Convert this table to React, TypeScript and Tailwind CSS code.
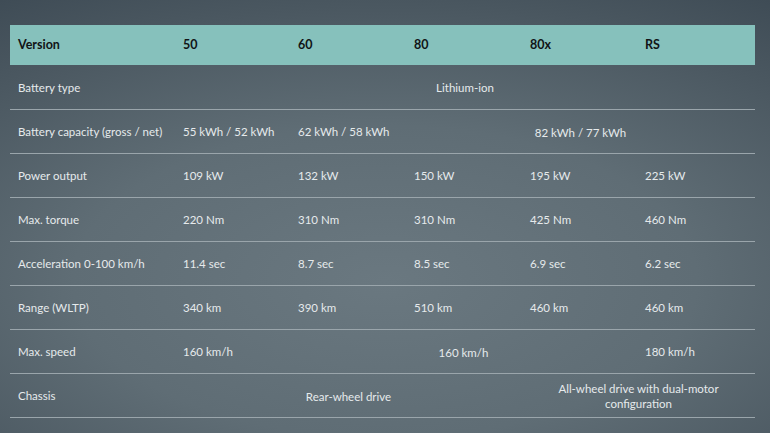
import React from "react";

type Cell = { text: React.ReactNode; span?: number; center?: boolean };
type Row = { label: string; cells: Cell[] };

const rows: Row[] = [
  { label: "Battery type", cells: [{ text: "Lithium-ion", span: 5, center: true }] },
  {
    label: "Battery capacity (gross / net)",
    cells: [
      { text: "55 kWh / 52 kWh" },
      { text: "62 kWh / 58 kWh" },
      { text: "82 kWh / 77 kWh", span: 3, center: true },
    ],
  },
  {
    label: "Power output",
    cells: [{ text: "109 kW" }, { text: "132 kW" }, { text: "150 kW" }, { text: "195 kW" }, { text: "225 kW" }],
  },
  {
    label: "Max. torque",
    cells: [{ text: "220 Nm" }, { text: "310 Nm" }, { text: "310 Nm" }, { text: "425 Nm" }, { text: "460 Nm" }],
  },
  {
    label: "Acceleration 0-100 km/h",
    cells: [{ text: "11.4 sec" }, { text: "8.7 sec" }, { text: "8.5 sec" }, { text: "6.9 sec" }, { text: "6.2 sec" }],
  },
  {
    label: "Range (WLTP)",
    cells: [{ text: "340 km" }, { text: "390 km" }, { text: "510 km" }, { text: "460 km" }, { text: "460 km" }],
  },
  {
    label: "Max. speed",
    cells: [{ text: "160 km/h" }, { text: "160 km/h", span: 3, center: true }, { text: "180 km/h" }],
  },
  {
    label: "Chassis",
    cells: [
      { text: "Rear-wheel drive", span: 3, center: true },
      {
        text: (
          <>
            <span className="whitespace-nowrap">All-wheel drive with dual-motor</span>
            <br />
            configuration
          </>
        ),
        span: 2,
        center: true,
      },
    ],
  },
];

export default function App() {
  return (
    <div
      className="w-[770px] h-[433px] overflow-hidden bg-[radial-gradient(ellipse_90%_80%_at_50%_65%,#6a7880_0%,#5f6d75_45%,#4a5760_80%,#3e4b55_100%)] pt-[25px] pl-[10px]"
      style={{ fontFamily: "Lato, 'Noto Sans', sans-serif" }}
    >
      <table className="w-[745px] table-fixed border-collapse text-[11.5px] text-[#e6eaec]">
        <colgroup>
          <col className="w-[165px]" />
          <col className="w-[115px]" />
          <col className="w-[116px]" />
          <col className="w-[116px]" />
          <col className="w-[115px]" />
          <col className="w-[118px]" />
        </colgroup>
        <thead>
          <tr className="h-[40px] bg-[#86c1bc] text-[#111416] text-[12.5px] font-bold">
            <th className="text-left pl-[8px] font-bold">Version</th>
            <th className="text-left pl-[8px] font-bold">50</th>
            <th className="text-left pl-[8px] font-bold">60</th>
            <th className="text-left pl-[8px] font-bold">80</th>
            <th className="text-left pl-[8px] font-bold">80x</th>
            <th className="text-left pl-[8px] font-bold">RS</th>
          </tr>
        </thead>
        <tbody>
          {rows.map((r) => (
            <tr key={r.label} className="h-[44px] border-b-[1.5px] border-[#9aa5ab]">
              <td className="pl-[8px] pt-[2px] align-middle">{r.label}</td>
              {r.cells.map((c, i) => (
                <td
                  key={i}
                  colSpan={c.span ?? 1}
                  className={
                    c.center
                      ? "text-center pt-[2px] align-middle leading-[15px]"
                      : "text-left pl-[8px] pt-[2px] align-middle"
                  }
                >
                  {c.text}
                </td>
              ))}
            </tr>
          ))}
        </tbody>
      </table>
    </div>
  );
}
